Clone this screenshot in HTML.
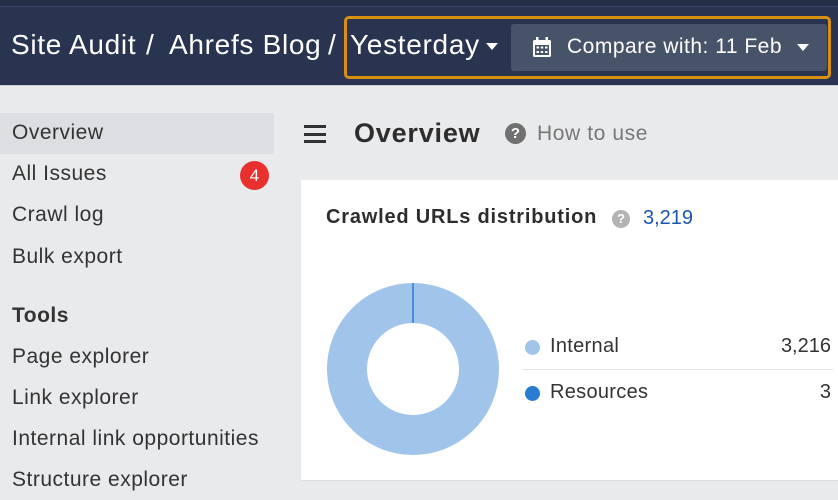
<!DOCTYPE html>
<html><head><style>
*{margin:0;padding:0;box-sizing:border-box}
body{width:838px;height:496px;overflow:hidden;background:#e9eaec;font-family:"Liberation Sans",Arial,sans-serif;position:relative;color:#333}
.hdr{position:absolute;left:0;top:0;width:838px;height:86px;background:#293450;border-bottom:1px solid #c9ccd2}
.hdr .top{position:absolute;left:0;top:0;width:838px;height:7px;background:#252f48;border-bottom:1px solid #3b4866}
.c{position:absolute;top:29px;color:#fff;font-size:28px;letter-spacing:0.7px;white-space:nowrap}
.box{position:absolute;left:344px;top:16px;width:487px;height:63px;border:3px solid #d88f12;border-radius:5px}
.cmp{position:absolute;left:511px;top:24px;width:316px;height:47px;background:#475369;border-radius:3px;color:#fff;font-size:20px}
.tri{display:inline-block;width:0;height:0;border-left:6px solid transparent;border-right:6px solid transparent;border-top:7px solid #fff}
.side a{position:absolute;left:0;width:274px;padding-left:12px;font-size:21px;letter-spacing:0.5px;color:#333;display:block;height:40px;line-height:40px}
.card{position:absolute;left:301px;top:180px;width:537px;height:301px;background:#fff;border-bottom:1px solid #dcdde0}
</style></head><body>
<div class="hdr"><div class="top"></div>
<span class="c" style="left:11px">Site Audit</span>
<span class="c" style="left:146px">/</span>
<span class="c" style="left:169px">Ahrefs Blog</span>
<span class="c" style="left:328px">/</span>
<span class="c" style="left:350px">Yesterday</span>
<span class="tri" style="position:absolute;left:486px;top:43px"></span>
<div class="box"></div>
<div class="cmp">
<svg style="position:absolute;left:21px;top:13px" width="20" height="21" viewBox="0 0 20 21"><rect x="1" y="3" width="18" height="17" rx="1.5" fill="#fff"/><rect x="4" y="0" width="2.5" height="5" fill="#fff"/><rect x="13.5" y="0" width="2.5" height="5" fill="#fff"/><rect x="3" y="8" width="14" height="10" fill="#475369"/><g fill="#fff"><rect x="4.5" y="9.5" width="2.5" height="2"/><rect x="8.7" y="9.5" width="2.5" height="2"/><rect x="13" y="9.5" width="2.5" height="2"/><rect x="4.5" y="14" width="2.5" height="2"/><rect x="8.7" y="14" width="2.5" height="2"/><rect x="13" y="14" width="2.5" height="2"/></g></svg>
<span style="position:absolute;left:56px;top:11px;font-size:21px;letter-spacing:0.5px;white-space:nowrap">Compare with: 11 Feb</span>
<span class="tri" style="position:absolute;left:286px;top:20px"></span></div>
</div>
<div class="side">
<a style="top:113px;background:#dcdee2;border-radius:0 3px 3px 0;height:41px">Overview</a>
<a style="top:154px">All Issues</a>
<div style="position:absolute;left:240px;top:161px;width:29px;height:29px;border-radius:50%;background:#e8312f;color:#fff;font-size:17px;text-align:center;line-height:29px">4</div>
<a style="top:195px">Crawl log</a>
<a style="top:237px">Bulk export</a>
<a style="top:296px;font-weight:bold">Tools</a>
<a style="top:337px">Page explorer</a>
<a style="top:378px">Link explorer</a>
<a style="top:419px">Internal link opportunities</a>
<a style="top:460px">Structure explorer</a>
</div>
<div style="position:absolute;left:304px;top:125px;width:22px;height:18px">
<div style="height:3px;background:#333;margin-bottom:4.5px"></div><div style="height:3px;background:#333;margin-bottom:4.5px"></div><div style="height:3px;background:#333"></div></div>
<div style="position:absolute;left:354px;top:118px;font-size:27px;font-weight:bold;color:#2d2d2d;letter-spacing:0.8px">Overview</div>
<div style="position:absolute;left:505px;top:123px;width:21px;height:21px;border-radius:50%;background:#707070;color:#fff;font-weight:bold;font-size:15px;text-align:center;line-height:21px">?</div>
<div style="position:absolute;left:537px;top:122px;font-size:21px;color:#777;letter-spacing:0.6px">How to use</div>
<div class="card">
<div style="position:absolute;left:25px;top:26px;font-size:20px;font-weight:bold;color:#2d2d2d;letter-spacing:0.8px;white-space:nowrap">Crawled URLs distribution</div>
<div style="position:absolute;left:311px;top:30px;width:18px;height:18px;border-radius:50%;background:#b3b3b3;color:#fff;font-weight:bold;font-size:13px;text-align:center;line-height:18px">?</div>
<div style="position:absolute;left:342px;top:27px;font-size:20px;color:#1a56b0">3,219</div>
<svg style="position:absolute;left:26px;top:103px" width="172" height="172" viewBox="0 0 172 172"><circle cx="86" cy="86" r="66" fill="none" stroke="#a0c4ea" stroke-width="40"/><line x1="86" y1="0" x2="86" y2="40" stroke="#2b7bd3" stroke-width="1.5"/></svg>
<div style="position:absolute;left:224px;top:160px;width:15px;height:15px;border-radius:50%;background:#a0c4ea"></div>
<div style="position:absolute;left:249px;top:155px;font-size:20px;letter-spacing:0.3px">Internal</div>
<div style="position:absolute;right:7px;top:155px;font-size:20px">3,216</div>
<div style="position:absolute;left:222px;top:189px;width:310px;height:1px;background:#e3e3e3"></div>
<div style="position:absolute;left:224px;top:206px;width:15px;height:15px;border-radius:50%;background:#2b7bd3"></div>
<div style="position:absolute;left:249px;top:201px;font-size:20px;letter-spacing:0.3px">Resources</div>
<div style="position:absolute;right:7px;top:201px;font-size:20px">3</div>
</div>
</body></html>
